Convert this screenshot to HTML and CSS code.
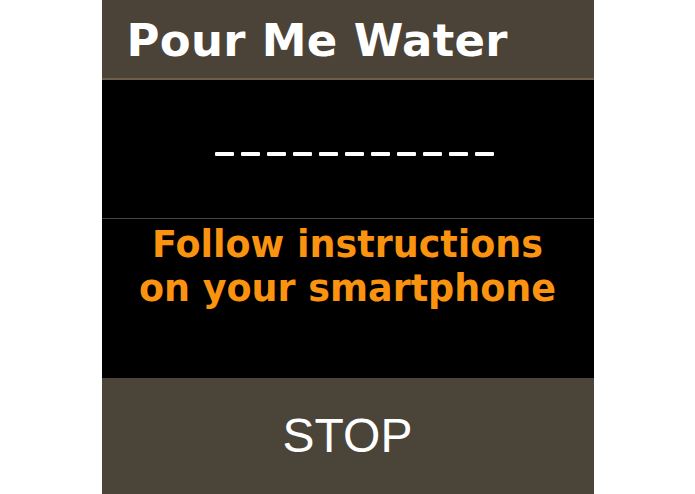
FILE: index.html
```html
<!DOCTYPE html>
<html lang="en">
<head>
<meta charset="utf-8">
<title>Pour Me Water</title>
<link rel="stylesheet" href="styles.css">
</head>
<body>
<div class="panel">
  <header class="header">
    <h1 class="title">Pour Me Water</h1>
  </header>
  <main class="screen">
    <div class="code" aria-label="-----------">
      <span class="dash"></span><span class="dash"></span><span class="dash"></span><span class="dash"></span><span class="dash"></span><span class="dash"></span><span class="dash"></span><span class="dash"></span><span class="dash"></span><span class="dash"></span><span class="dash"></span>
    </div>
    <div class="message">
      <p class="instructions">Follow instructions<br>on your smartphone</p>
    </div>
  </main>
  <footer class="footer">
    <button class="stop" type="button">STOP</button>
  </footer>
</div>
</body>
</html>
```

FILE: styles.css
```css
html, body {
  margin: 0;
  padding: 0;
  background: #ffffff;
}

.panel {
  width: 492px;
  height: 494px;
  margin: 0 auto;
  display: flex;
  flex-direction: column;
  overflow: hidden;
}

.header {
  height: 80px;
  flex: 0 0 80px;
  background: #4b4337;
  border-bottom: 2px solid #6e5f4b;
  display: flex;
  align-items: center;
  padding-left: 25px;
  padding-top: 3px;
  box-sizing: border-box;
}

.title {
  margin: 0;
  font-family: "DejaVu Sans", Verdana, sans-serif;
  font-weight: bold;
  font-size: 45px;
  line-height: 1;
  color: #ffffff;
  letter-spacing: 0.3px;
}

.screen {
  flex: 0 0 298px;
  background: #000000;
  display: flex;
  flex-direction: column;
}

.code {
  height: 139px;
  flex: 0 0 139px;
  display: flex;
  align-items: center;
  justify-content: center;
  gap: 7px;
  padding-left: 14px;
  padding-top: 10px;
  box-sizing: border-box;
  border-bottom: 1px solid #454545;
}

.dash {
  width: 19px;
  height: 4px;
  background: #ffffff;
  border-radius: 1px;
}

.message {
  flex: 1;
  display: flex;
  justify-content: center;
  padding-top: 4px;
}

.instructions {
  margin: 0;
  font-family: "DejaVu Sans", Verdana, sans-serif;
  font-weight: bold;
  font-size: 36.5px;
  line-height: 44px;
  color: #fa930f;
  text-align: center;
}

.footer {
  flex: 1;
  background: #4b4439;
  display: flex;
  align-items: center;
  justify-content: center;
}

.stop {
  background: none;
  border: none;
  padding: 0;
  margin: 0;
  font-family: "Liberation Sans", Arial, sans-serif;
  font-size: 48px;
  color: #ffffff;
  line-height: 1;
  cursor: pointer;
}
```
